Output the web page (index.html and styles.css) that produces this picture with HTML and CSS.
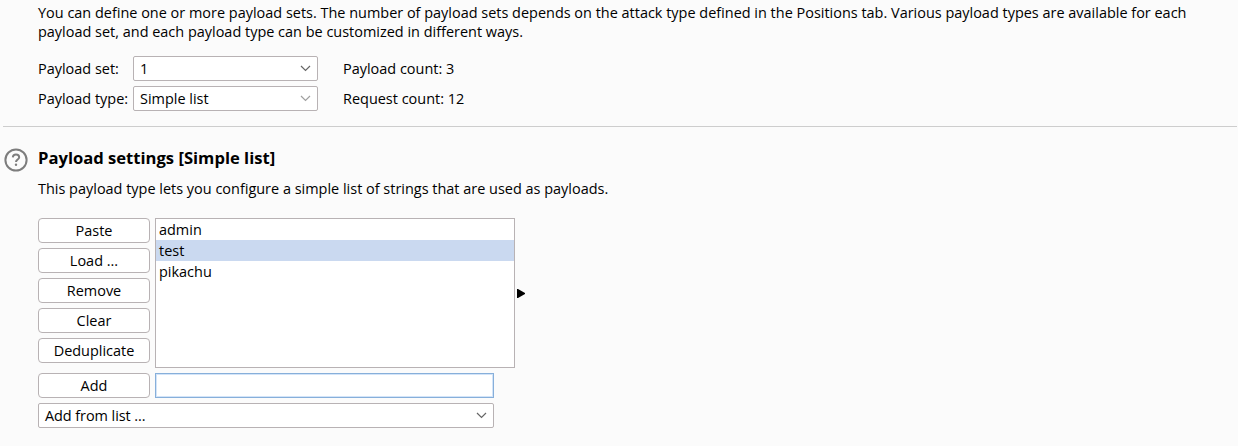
FILE: index.html
```html
<!DOCTYPE html>
<html lang="en">
<head>
<meta charset="utf-8">
<title>Payloads</title>
<link rel="stylesheet" href="styles.css">
</head>
<body>
<section class="sets">
  <p>You can define one or more payload sets. The number of payload sets depends on the attack type defined in the Positions tab. Various payload types are available for each<br>payload set, and each payload type can be customized in different ways.</p>
  <div class="set-grid">
    <span>Payload set:</span>
    <div class="select"><span>1</span><svg class="chevron" viewBox="0 0 11 7"><path d="M1 1l4.5 4.5L10 1"/></svg></div>
    <span class="count">Payload count: 3</span>
    <span>Payload type:</span>
    <div class="select"><span>Simple list</span><svg class="chevron light" viewBox="0 0 11 7"><path d="M1 1l4.5 4.5L10 1"/></svg></div>
    <span class="count">Request count: 12</span>
  </div>
</section>
<section class="settings">
  <svg class="help" viewBox="0 0 24 24"><circle cx="12" cy="12" r="10.6"/><path d="M8.8 9.4C8.9 7.5 10.2 6.4 12 6.4s3.2 1.1 3.2 2.8c0 2.2-3.2 2.4-3.2 4.7"/><circle class="dot" cx="12" cy="16.7" r="1.2"/></svg>
  <div class="content">
    <h2>Payload settings [Simple list]</h2>
    <p class="description">This payload type lets you configure a simple list of strings that are used as payloads.</p>
    <div class="editor">
      <div class="buttons">
        <button>Paste</button>
        <button>Load ...</button>
        <button>Remove</button>
        <button>Clear</button>
        <button>Deduplicate</button>
      </div>
      <ul class="list">
        <li>admin</li>
        <li class="selected">test</li>
        <li>pikachu</li>
      </ul>
      <svg class="arrow" viewBox="0 0 8 9"><path d="M0 0h1l7 4v1l-7 4H0z"/></svg>
    </div>
    <div class="add-row">
      <button>Add</button>
      <input class="entry" type="text" aria-label="New item">
    </div>
    <div class="select wide"><span class="prompt">Add from list ...</span><svg class="chevron" viewBox="0 0 11 7"><path d="M1 1l4.5 4.5L10 1"/></svg></div>
  </div>
</section>
</body>
</html>
```
FILE: styles.css
```css
* { box-sizing: border-box; }
body {
  margin: 0;
  height: 446px;
  overflow: hidden;
  background: #fbfbfb;
  color: #000;
  font: 14.46px/19px "Open Sans", "Noto Sans", sans-serif;
  white-space: nowrap;
}
p, h2, ul { margin: 0; padding: 0; }
.sets {
  height: 127px;
  margin: 0 1px 0 3px;
  padding: 3px 0 0 35px;
  border-bottom: 1px solid #cdcdcd;
}
.set-grid {
  display: grid;
  grid-template-columns: 95px 185px auto;
  grid-auto-rows: 25px;
  row-gap: 5px;
  align-items: center;
  margin-top: 15px;
}
.count { padding-left: 25px; }
.select {
  display: flex;
  align-items: center;
  justify-content: space-between;
  width: 185px;
  height: 25px;
  padding: 0 6px;
  border: 1px solid #b8b2b4;
  border-radius: 2px;
  background: #fff;
}
.chevron {
  width: 11px;
  height: 7px;
  fill: none;
  stroke: #666;
  stroke-width: 1.2;
}
.light { stroke: #a0a0a0; }
.settings { display: flex; padding-left: 3.5px; }
.help {
  width: 24px;
  height: 24px;
  margin: 20.5px 10.5px 0 0;
  fill: none;
  stroke: #7d7d7d;
  stroke-width: 2;
}
.help .dot { fill: #7d7d7d; stroke: none; }
.content { padding-top: 20px; }
h2 { font-size: 16.6px; line-height: 22px; font-weight: 700; }
.description { margin-top: 10px; }
.editor { display: flex; align-items: flex-start; margin-top: 20px; }
.buttons { display: grid; gap: 5px; margin-right: 5px; }
button {
  width: 112px;
  height: 25px;
  padding: 0;
  border: 1px solid #b8b2b4;
  border-radius: 4px;
  background: #fff;
  color: #000;
  font: inherit;
}
.list {
  width: 360px;
  height: 150px;
  border: 1px solid #b8b2b4;
  background: #fff;
  list-style: none;
}
.list li { height: 21px; padding-left: 3px; line-height: 21px; }
.list .selected { background: #cad9f0; }
.arrow { width: 8px; height: 9px; margin: 71px 0 0 2px; }
.add-row { display: flex; gap: 5px; margin: 5px 0; }
.entry {
  width: 339px;
  height: 25px;
  padding: 0 4px;
  border: 1px solid #87afda;
  box-shadow: inset 0 0 0 1px #d3e4f8;
  background: #fff;
  font: inherit;
  outline: 0;
}
.wide { width: 456px; }
.prompt { letter-spacing: -0.07px; }
```
